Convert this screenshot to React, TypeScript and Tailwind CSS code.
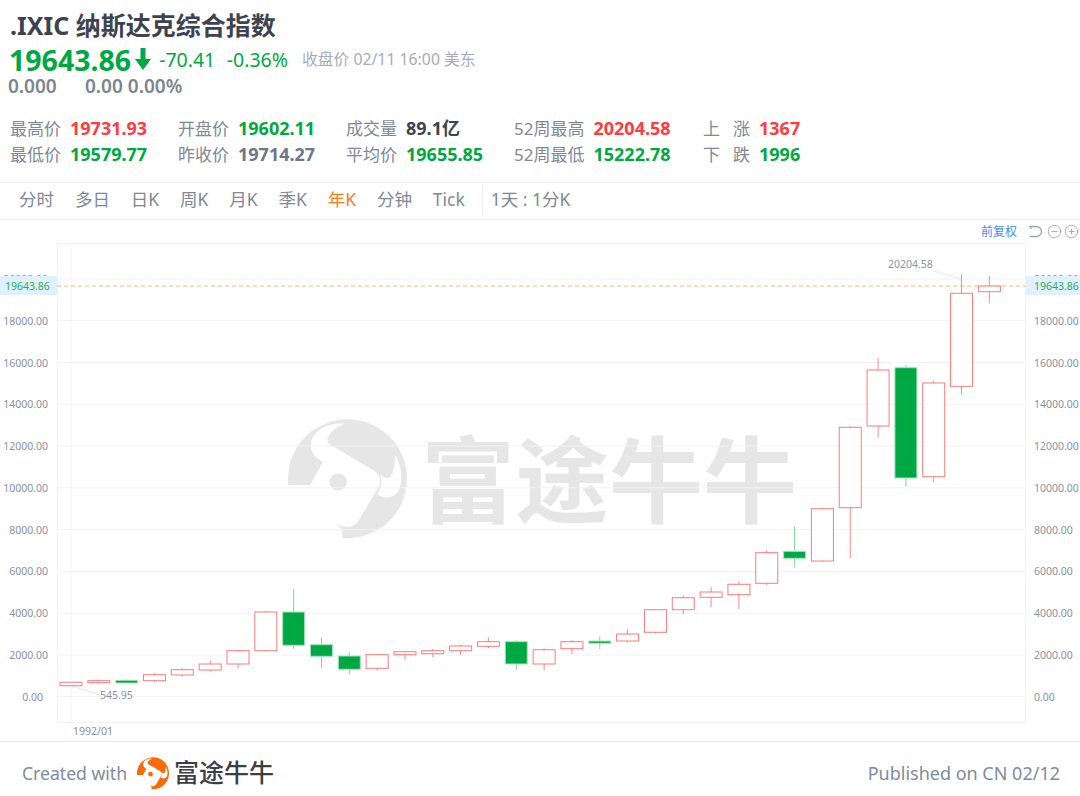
import { CircleMinus, CirclePlus } from 'lucide-react';

type Candle = {
  top: number;
  bottom: number;
  high: number;
  low: number;
  down?: boolean;
};

const GREEN = '#00a843';
const RED = '#fb5a5a';
const BULL_PATH =
  'M52 252 A172 172 0 1 1 208 405 L208 382 L182 355 C205 378 240 382 258 350 L310 262 C325 235 315 218 290 205 L180 140 C165 130 160 122 170 108 C180 94 196 82 215 75 C170 70 130 90 118 125 C112 155 130 175 152 185 L115 252 Z M360 165 C380 195 385 240 370 270 C355 292 325 293 308 278 C320 262 323 240 318 222 C332 232 342 236 350 224 C358 210 361 188 360 165 Z';

// page pixel coordinates, one candle per year from 1992
const candles: Candle[] = [
  { top: 682.3, bottom: 685.7, high: 682.3, low: 685.7 },
  { top: 680.7, bottom: 682.7, high: 679.3, low: 683.7 },
  { top: 680.3, bottom: 683, high: 679.3, low: 683, down: true },
  { top: 674.7, bottom: 680.7, high: 673.3, low: 682 },
  { top: 669.7, bottom: 675, high: 668.3, low: 676.3 },
  { top: 664, bottom: 670, high: 660.3, low: 671.7 },
  { top: 650.7, bottom: 664, high: 650, low: 668.3 },
  { top: 612, bottom: 650.7, high: 611.3, low: 651.3 },
  { top: 612, bottom: 645.3, high: 589, low: 648.7, down: true },
  { top: 644.7, bottom: 656.3, high: 637.7, low: 668, down: true },
  { top: 656, bottom: 669.3, high: 652.3, low: 674, down: true },
  { top: 654.7, bottom: 668.3, high: 654, low: 670.7 },
  { top: 651.7, bottom: 654.7, high: 651, low: 660 },
  { top: 650.7, bottom: 653.7, high: 649, low: 657.3 },
  { top: 646, bottom: 650.7, high: 644.7, low: 655 },
  { top: 641.7, bottom: 646.3, high: 637.3, low: 648.3 },
  { top: 641.7, bottom: 664, high: 640, low: 670, down: true },
  { top: 649.7, bottom: 664, high: 648.3, low: 670.3 },
  { top: 641.7, bottom: 648.7, high: 640, low: 654 },
  { top: 641, bottom: 643.3, high: 636.3, low: 649, down: true },
  { top: 634, bottom: 641, high: 629.3, low: 642.7 },
  { top: 609.7, bottom: 632.3, high: 609, low: 633.3 },
  { top: 597.7, bottom: 609.7, high: 595.7, low: 614.3 },
  { top: 592, bottom: 597.3, high: 587, low: 607.3 },
  { top: 584.3, bottom: 594.7, high: 581.3, low: 609 },
  { top: 552.7, bottom: 583.3, high: 550.3, low: 585 },
  { top: 551.3, bottom: 558.3, high: 526.7, low: 567.3, down: true },
  { top: 508.7, bottom: 561, high: 507.7, low: 562 },
  { top: 427.3, bottom: 507.7, high: 426, low: 558.3 },
  { top: 370, bottom: 426, high: 358, low: 437.7 },
  { top: 367.7, bottom: 478, high: 365, low: 486.3, down: true },
  { top: 383, bottom: 476.7, high: 380.3, low: 482.3 },
  { top: 293.3, bottom: 386.3, high: 274, low: 394.3 },
  { top: 286, bottom: 291.7, high: 276, low: 303.3 },
];

const axis = [
  { label: '20000.00', y: 279 },
  { label: '18000.00', y: 320.7 },
  { label: '16000.00', y: 362.5 },
  { label: '14000.00', y: 404.3 },
  { label: '12000.00', y: 446 },
  { label: '10000.00', y: 487.8 },
  { label: '8000.00', y: 529.6 },
  { label: '6000.00', y: 571.4 },
  { label: '4000.00', y: 613.2 },
  { label: '2000.00', y: 655 },
  { label: '0.00', y: 696.7 },
];

const tabs = ['分时', '多日', '日K', '周K', '月K', '季K', '年K', '分钟', 'Tick'];

const stats = [
  [
    { label: '最高价', value: '19731.93', color: 'text-[#ff3b41]' },
    { label: '最低价', value: '19579.77', color: 'text-[#00a843]' },
  ],
  [
    { label: '开盘价', value: '19602.11', color: 'text-[#00a843]' },
    { label: '昨收价', value: '19714.27', color: 'text-[#6f7685]' },
  ],
  [
    { label: '成交量', value: '89.1亿', color: 'text-[#3d4350]' },
    { label: '平均价', value: '19655.85', color: 'text-[#00a843]' },
  ],
  [
    { label: '52周最高', value: '20204.58', color: 'text-[#ff3b41]' },
    { label: '52周最低', value: '15222.78', color: 'text-[#00a843]' },
  ],
  [
    { label: '上', label2: '涨', value: '1367', color: 'text-[#ff3b41]' },
    { label: '下', label2: '跌', value: '1996', color: 'text-[#00a843]' },
  ],
];

const statWidths = ['w-[168px]', 'w-[168px]', 'w-[168px]', 'w-[189px]', 'w-auto'];

function CandleChart() {
  return (
    <svg viewBox="0 243 1080 498" className="block h-[498px] w-[1080px]">
      <text x="421" y="516" className="fill-[#e6e6e6] text-[94px] font-bold">富途牛牛</text>
      <svg x="288" y="419" width="119" height="121" viewBox="51 61 344 350">
        <path fillRule="evenodd" fill="#e6e6e6" d={BULL_PATH} />
        <circle cx="196" cy="243" r="25" fill="#e6e6e6" />
      </svg>

      <rect x="57.5" y="243.5" width="968" height="479" fill="none" stroke="#f0f2f6" />
      <line x1="71" x2="71" y1="243" y2="722" stroke="#f1f3f8" />
      {axis.map((tick) => (
        <line key={tick.label} x1="57" x2="1026" y1={tick.y} y2={tick.y} stroke="#f0f2f7" />
      ))}

      <g className="fill-[#8a919f] text-[10.5px]">
        {axis.map((tick) => (
          <g key={tick.label}>
            <text x={tick.label === '0.00' ? 43 : 48} y={tick.y + 4} textAnchor="end">{tick.label}</text>
            <text x="1034" y={tick.y + 4}>{tick.label}</text>
          </g>
        ))}
        <text x="73" y="735">1992/01</text>
        <text x="100" y="699">545.95</text>
        <text x="888" y="268">20204.58</text>
      </g>
      <line x1="72" y1="686" x2="100" y2="695" stroke="#e4e8f0" />
      <line x1="933" y1="271" x2="961" y2="279" stroke="#e4e8f0" />

      {candles.map((c, i) => {
        const cx = 71 + i * 27.83;
        const color = c.down ? GREEN : RED;
        return (
          <g key={i}>
            <line x1={cx} x2={cx} y1={c.high} y2={c.low} stroke={c.down ? '#7fd3a1' : '#fb8a8a'} />
            <rect
              x={cx - 11}
              y={c.top}
              width={22}
              height={c.bottom - c.top}
              fill={c.down ? color : '#ffffff'}
              stroke={c.down ? '#a6e3bf' : color}
              strokeOpacity={c.down ? 1 : 0.8}
            />
          </g>
        );
      })}

      <rect x="0" y="276" width="57" height="19" fill="#e1f0fd" />
      <rect x="1026" y="276" width="54" height="19" fill="#e1f0fd" />
      <line x1="57" x2="1026" y1="286" y2="286" stroke="#ffb07a" strokeDasharray="4 3" />
      <g className="fill-[#1fae5c] text-[10.5px]">
        <text x="5" y="290">19643.86</text>
        <text x="1034" y="290">19643.86</text>
      </g>
    </svg>
  );
}

export default function App() {
  return (
    <div className="h-[796px] w-[1080px] overflow-hidden bg-white font-['Noto_Sans','Noto_Sans_CJK_SC',sans-serif]">
      <header className="h-[182px] px-[10px] pt-[8px]">
        <h1 className="text-[25px] leading-[34px] font-bold text-[#3d4350]">.IXIC 纳斯达克综合指数</h1>
        <div className="-ml-[1px] flex h-[34px] items-center pt-[2px] leading-none">
          <span className="text-[28.5px] font-bold text-[#00a843]">19643.86</span>
          <svg viewBox="0 0 16 22" className="mt-[-3px] ml-[4px] h-[22px] w-[16px] fill-[#00a843]">
            <path d="M5.5 0 H10.5 V11 H16 L8 22 L0 11 H5.5 Z" />
          </svg>
          <span className="ml-[8px] text-[19.5px] text-[#00a843]">-70.41</span>
          <span className="ml-[11.5px] text-[19.5px] text-[#00a843]">-0.36%</span>
          <span className="ml-[14px] text-[15.8px] text-[#a5adba]">收盘价 02/11 16:00 美东</span>
        </div>
        <div className="-ml-[2px] -mt-[1px] flex h-[22px] items-center text-[19px] leading-none font-semibold text-[#7d8491]">
          <span className="w-[77px]">0.000</span>
          <span>0.00 0.00%</span>
        </div>
        <div className="mt-[18px] flex">
          {stats.map((column, i) => (
            <div key={i} className={statWidths[i]}>
              {column.map((item) => (
                <div key={item.label} className="flex h-[26px] items-center gap-[9px] text-[17px] leading-none">
                  <span className="flex justify-between text-[#7f8896]">
                    <span>{item.label}</span>
                    {'label2' in item && <span className="ml-[13px]">{item.label2}</span>}
                  </span>
                  <span className={`text-[18px] font-bold ${item.color}`}>{item.value}</span>
                </div>
              ))}
            </div>
          ))}
        </div>
      </header>

      <nav className="flex h-[38px] items-center gap-[20.9px] border-y border-[#eceef3] pb-[2px] pl-[19px] text-[17.5px] leading-none text-[#7f8896]">
        {tabs.map((tab) => (
          <span key={tab} className={tab === '年K' ? 'text-[#ff7a1a]' : undefined}>{tab}</span>
        ))}
        <span className="-ml-[4px] flex h-[30px] items-center border-l border-[#eceef3] pl-[8px]">1天 : 1分K</span>
      </nav>

      <div className="flex h-[23px] items-center justify-end gap-[2px] pr-[1px] text-[#a0a4ab]">
        <span className="mr-[9px] text-[12px] text-[#3e8bff]">前复权</span>
        <svg viewBox="0 0 15 13" className="mr-[2px] h-[13px] w-[15px] fill-none stroke-current stroke-[1.3]">
          <path d="M1.5 0.8 L3.5 4 M1.5 1.5 H8.5 A5 5 0 0 1 8.5 11.5 H1.5" />
        </svg>
        <CircleMinus size={15} strokeWidth={1.4} />
        <CirclePlus size={15} strokeWidth={1.4} />
      </div>
      <CandleChart />

      <footer className="flex h-[55px] items-center justify-between border-t border-[#e6e8ec] pt-[8px] pr-[20px] pl-[22px] text-[18px] text-[#808b9b]">
        <div className="flex items-center">
          <span className="text-[17.6px]">Created with</span>
          <svg viewBox="51 61 344 350" className="mr-[5px] ml-[10px] h-[33px] w-[32px]">
            <path fillRule="evenodd" fill="#f96b0a" d={BULL_PATH} />
            <circle cx="196" cy="243" r="25" fill="#f96b0a" />
          </svg>
          <span className="text-[25px] font-medium text-[#3c4043]">富途牛牛</span>
        </div>
        <span>Published on CN 02/12</span>
      </footer>
    </div>
  );
}
